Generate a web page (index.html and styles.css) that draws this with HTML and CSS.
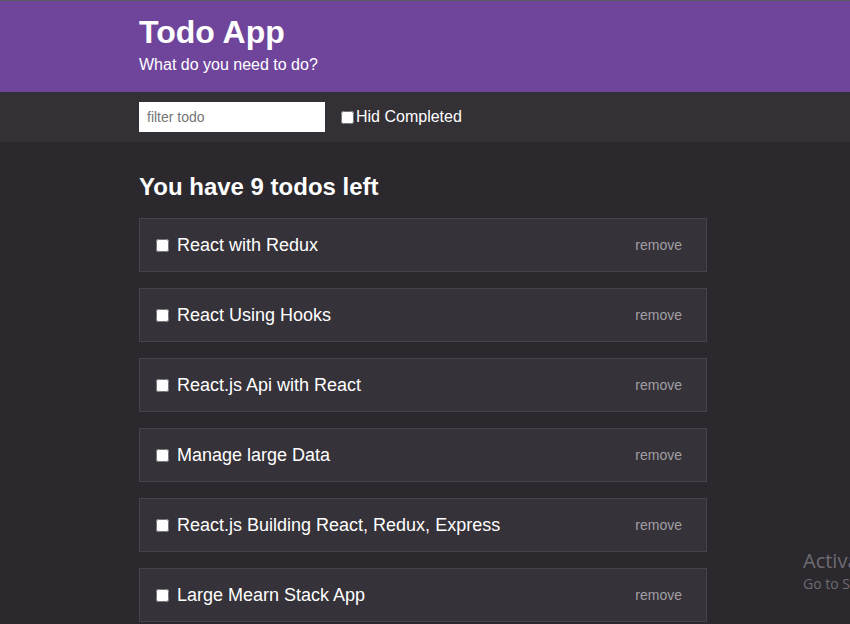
FILE: index.html
```html
<!DOCTYPE html>
<html lang="en">
<head>
<meta charset="utf-8">
<title>Todo App</title>
<link rel="stylesheet" href="styles.css">
</head>
<body>
  <header class="header">
    <div class="container">
      <h1 class="title">Todo App</h1>
      <p class="subtitle">What do you need to do?</p>
    </div>
  </header>
  <div class="actions">
    <div class="container actions-row">
      <input class="filter" type="text" placeholder="filter todo">
      <label class="hide-label"><input class="check" type="checkbox">Hid Completed</label>
    </div>
  </div>
  <main class="container main">
    <h2 class="summary">You have 9 todos left</h2>
    <ul class="list">
      <li class="item"><label class="item-label"><input class="check" type="checkbox">React with Redux</label><button class="remove">remove</button></li>
      <li class="item"><label class="item-label"><input class="check" type="checkbox">React Using Hooks</label><button class="remove">remove</button></li>
      <li class="item"><label class="item-label"><input class="check" type="checkbox">React.js Api with React</label><button class="remove">remove</button></li>
      <li class="item"><label class="item-label"><input class="check" type="checkbox">Manage large Data</label><button class="remove">remove</button></li>
      <li class="item"><label class="item-label"><input class="check" type="checkbox">React.js Building React, Redux, Express</label><button class="remove">remove</button></li>
      <li class="item"><label class="item-label"><input class="check" type="checkbox">Large Mearn Stack App</label><button class="remove">remove</button></li>
    </ul>
  </main>
  <div class="watermark">
    <div class="wm-title">Activate Windows</div>
    <div class="wm-sub">Go to Settings to activate Windows.</div>
  </div>
</body>
</html>
```
FILE: styles.css
```css
html, body {
  margin: 0;
  padding: 0;
  height: 100%;
}
body {
  background: #2b282e;
  font-family: "Liberation Sans", Arial, sans-serif;
  color: #ffffff;
  border-top: 1px solid #5a5a5a;
  overflow: hidden;
  position: relative;
}
.container {
  width: 568px;
  margin-left: 139px;
}
.header {
  background: #6f459c;
  padding: 12px 0 18px;
}
.title {
  margin: 0;
  font-size: 32px;
  line-height: 38px;
  font-weight: bold;
}
.subtitle {
  margin: 4px 0 0;
  font-size: 16px;
  line-height: 19px;
}
.actions {
  background: #333036;
  padding: 10px 0;
}
.actions-row {
  display: flex;
  align-items: center;
}
.filter {
  width: 186px;
  height: 30px;
  box-sizing: border-box;
  border: none;
  margin: 0;
  padding: 0 8px;
  font-family: "Liberation Sans", Arial, sans-serif;
  font-size: 14px;
  color: #333;
  background: #fff;
  outline: none;
}
.filter::placeholder {
  color: #757575;
}
.hide-label {
  display: flex;
  align-items: center;
  margin-left: 13px;
  font-size: 16px;
}
.check {
  width: 13px;
  height: 13px;
}
.hide-label .check {
  margin: 0 2px 0 3px;
}
.main {
  padding-top: 31px;
}
.summary {
  margin: 0 0 17px;
  font-size: 24px;
  line-height: 28px;
  font-weight: bold;
}
.list {
  list-style: none;
  margin: 0;
  padding: 0;
}
.item {
  display: flex;
  align-items: center;
  justify-content: space-between;
  height: 54px;
  box-sizing: border-box;
  background: #353239;
  border: 1px solid #46434b;
  padding: 0 24px 0 12px;
  margin-bottom: 16px;
}
.item-label {
  display: flex;
  align-items: center;
  font-size: 18px;
}
.item-label .check {
  margin: 0 8px 0 4px;
}
.remove {
  background: none;
  border: none;
  padding: 0;
  font-family: "Liberation Sans", Arial, sans-serif;
  font-size: 14px;
  color: #a19fa4;
  cursor: pointer;
}
.watermark {
  position: absolute;
  left: 803px;
  top: 547px;
  white-space: nowrap;
  color: #6e6b72;
  font-family: "Open Sans", "Noto Sans", sans-serif;
}
.wm-title {
  font-size: 20px;
  line-height: 26px;
}
.wm-sub {
  font-size: 14px;
  line-height: 20px;
}
```
